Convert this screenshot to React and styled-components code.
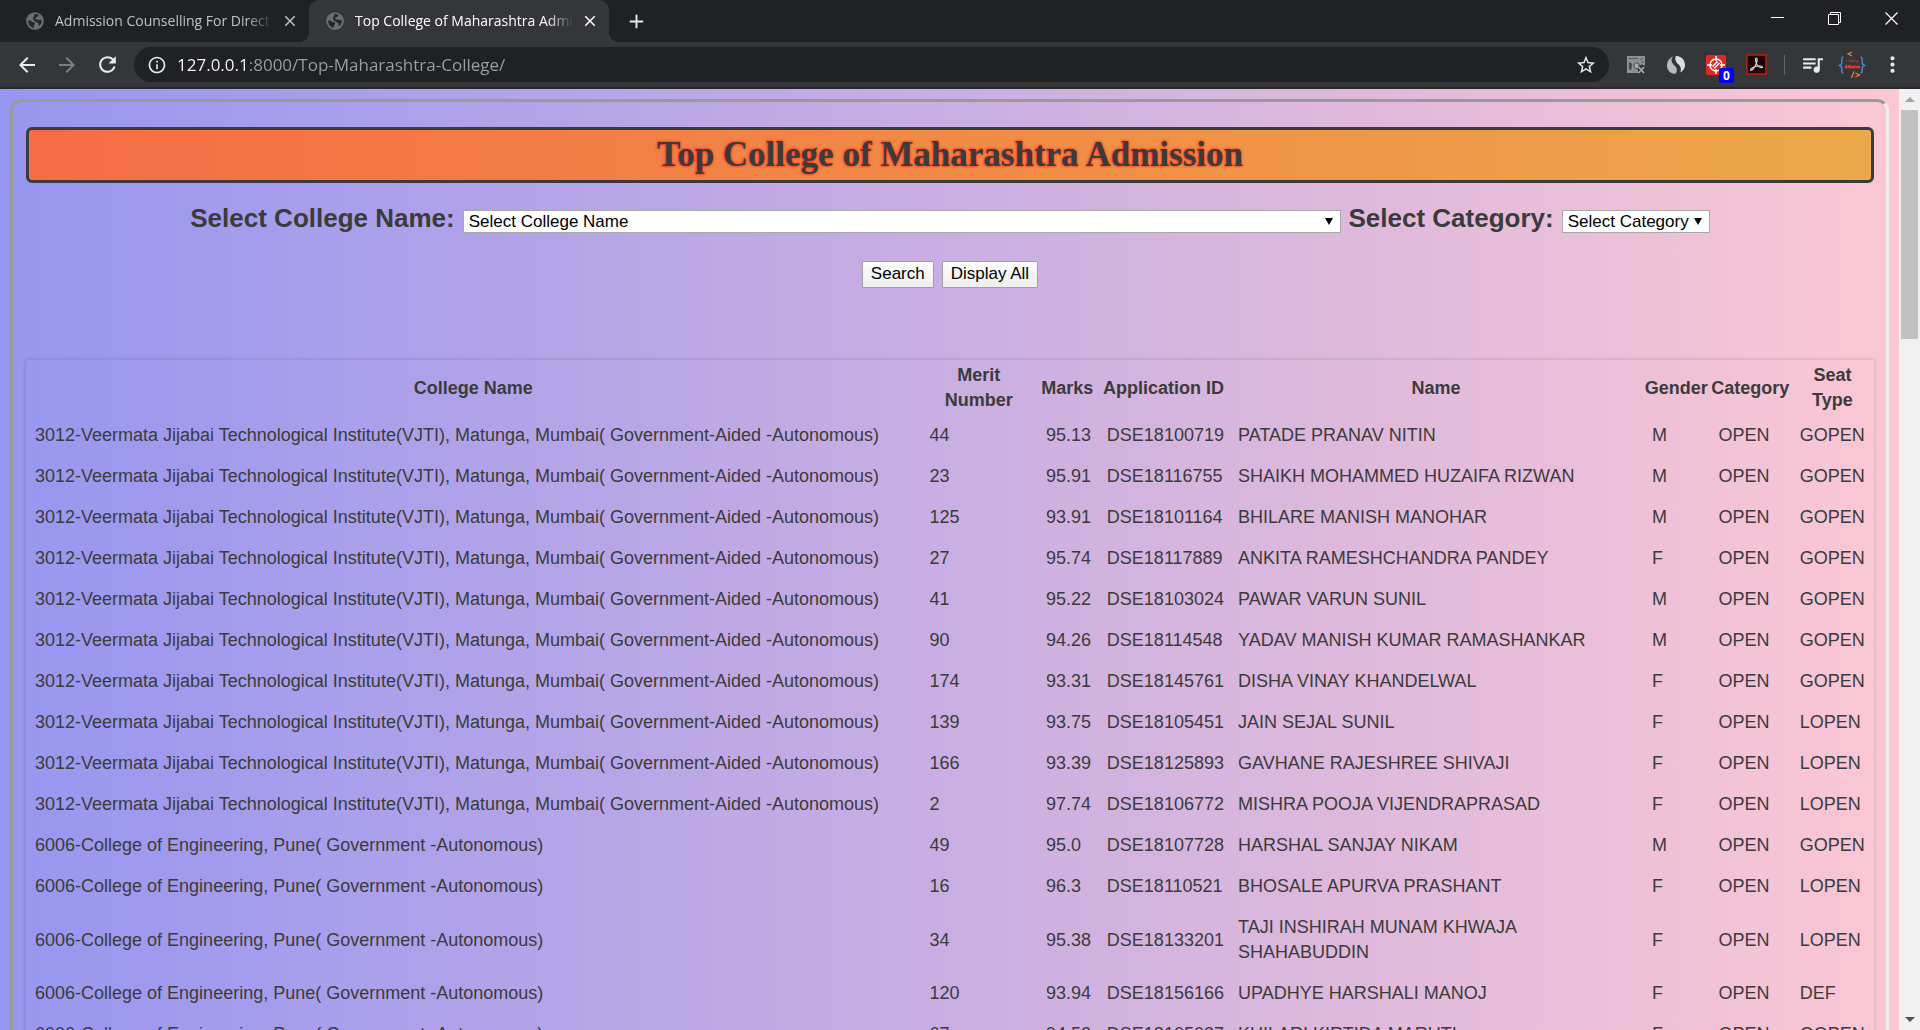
import React from "react";
import styled, { createGlobalStyle } from "styled-components";
import {
  MdAdd,
  MdArrowBack,
  MdArrowForward,
  MdClose,
  MdInfoOutline,
  MdMoreVert,
  MdQueueMusic,
  MdRefresh,
  MdStarBorder,
} from "react-icons/md";

const uiFont = `"Open Sans", "Noto Sans", sans-serif`;
const pageFont = `"Liberation Sans", Arial, sans-serif`;

const GlobalStyle = createGlobalStyle`
  *, *::before, *::after { box-sizing: border-box; }
  body { margin: 0; overflow: hidden; background: #202124; font-family: ${pageFont}; }
`;

/* ---------- browser window ---------- */

const Window = styled.div`
  display: flex;
  flex-direction: column;
  height: 100vh;
`;

const TabStrip = styled.header`
  display: flex;
  height: 42px;
  padding-left: 9px;
  background: #202124;
  color: #dee1e6;
  font-family: ${uiFont};
`;

const Tab = styled.div`
  position: relative;
  display: flex;
  align-items: center;
  width: 300px;
  padding: 0 9px 0 17px;
  border-radius: 10px 10px 0 0;
  background: ${(p) => (p.$active ? "#35363a" : "transparent")};
  color: ${(p) => (p.$active ? "#ffffff" : "#bdc1c6")};

  &::before,
  &::after {
    content: "";
    display: ${(p) => (p.$active ? "block" : "none")};
    position: absolute;
    bottom: 0;
    width: 10px;
    height: 10px;
  }
  &::before {
    left: -10px;
    background: radial-gradient(circle at 0 0, transparent 10px, #35363a 10px);
  }
  &::after {
    right: -10px;
    background: radial-gradient(circle at 100% 0, transparent 10px, #35363a 10px);
  }
`;

const TabTitle = styled.button`
  flex: 1;
  min-width: 0;
  margin: 0 7px 0 11px;
  padding: 0;
  border: 0;
  overflow: hidden;
  background: none;
  color: inherit;
  font: 14px/20px ${uiFont};
  text-align: left;
  white-space: nowrap;
  mask-image: linear-gradient(to right, #000 calc(100% - 26px), transparent);
`;

const IconButton = styled.button`
  display: flex;
  flex: none;
  align-items: center;
  justify-content: center;
  width: ${(p) => p.$width || 40}px;
  height: ${(p) => p.$height || 40}px;
  padding: 0;
  border: 0;
  background: none;
  color: ${(p) => p.$color || "#e8eaed"};
`;

const NewTab = styled(IconButton)`
  margin-left: 12px;
  height: 42px;
  width: 30px;
`;

const WindowControls = styled.div`
  display: flex;
  margin-left: auto;
`;

const Toolbar = styled.div`
  display: flex;
  align-items: center;
  height: 47px;
  padding: 0 8px 0 7px;
  border-bottom: 2px solid #28292b;
  background: #35363a;
`;

const AddressBar = styled.form`
  display: flex;
  flex: 1;
  align-items: center;
  height: 35px;
  margin: 0 7px;
  padding: 0 3px 0 13px;
  border-radius: 18px;
  background: #202124;
`;

const AddressInput = styled.input`
  flex: 1;
  min-width: 0;
  height: 30px;
  margin-left: 10px;
  padding: 0;
  border: 0;
  outline: 0;
  background: linear-gradient(to right, #ffffff 70px, #9aa0a6 70px);
  background-clip: text;
  -webkit-text-fill-color: transparent;
  font: 17px/30px ${uiFont};
`;

const ToolbarDivider = styled.span`
  width: 1px;
  height: 20px;
  margin: 0 7px 0 8px;
  background: #5f6368;
`;

const Body = styled.div`
  display: flex;
  flex: 1;
  min-height: 0;
`;

const ScrollTrack = styled.div`
  display: flex;
  flex: none;
  flex-direction: column;
  align-items: center;
  width: 21px;
  background: #f1f1f1;
`;

const ScrollArrow = styled.button`
  display: flex;
  align-items: center;
  justify-content: center;
  width: 21px;
  height: 21px;
  padding: 0;
  border: 0;
  background: none;

  &::before {
    content: "";
    border: 5px solid transparent;
    border-top-width: ${(p) => (p.$up ? 0 : 5)}px;
    border-bottom-width: ${(p) => (p.$up ? 5 : 0)}px;
    border-top-color: #505050;
    border-bottom-color: #a3a3a3;
  }
`;

const ScrollThumb = styled.div`
  width: 17px;
  height: 229px;
  margin-bottom: auto;
  background: #c1c1c1;
`;

/* ---------- page ---------- */

const Page = styled.main`
  flex: 1;
  min-width: 0;
  overflow: hidden;
  padding: 10px;
  background: linear-gradient(to right, #9796f0, #fbc7d4);
  color: #3b3b3b;
`;

const Frame = styled.section`
  padding: 25px 12px 25px 13px;
  border: 3px solid;
  border-color: #9a9a9a #eeeeee #eeeeee #9a9a9a;
  border-radius: 12px;
`;

const Title = styled.h1`
  margin: 0 0 20px;
  border: 3px solid #3b3b3b;
  border-radius: 6px;
  background: linear-gradient(to right, #f66c45, #eca849);
  font: bold 35px/50px "Liberation Serif", "Times New Roman", serif;
  text-align: center;
  text-shadow: 0 0 3px #ff0000;
`;

const Filters = styled.form`
  margin-bottom: 72px;
`;

const FilterRow = styled.div`
  display: flex;
  align-items: baseline;
  justify-content: center;
  gap: 8px;
`;

const ButtonRow = styled(FilterRow)`
  margin-top: 28px;
`;

const FilterLabel = styled.label`
  font-weight: bold;
  font-size: 26px;
  line-height: 30px;
  white-space: nowrap;
`;

const SelectBox = styled.span`
  position: relative;
  display: flex;
  width: ${(p) => p.$width};

  &::after {
    content: "";
    position: absolute;
    top: 8px;
    right: 8px;
    border: 4px solid transparent;
    border-top: 7px solid #000000;
    border-bottom: 0;
    pointer-events: none;
  }
`;

const Select = styled.select`
  appearance: none;
  width: 100%;
  height: 23px;
  padding: 0 5px;
  border: 1px solid #a9a9a9;
  border-radius: 0;
  background: #ffffff;
  color: #000000;
  font: 17px/21px ${pageFont};
`;

const Button = styled.button`
  height: 27px;
  padding: 0 8px 2px;
  border: 1px solid #a0a0a0;
  border-radius: 1px;
  background: linear-gradient(#fdfdfd, #eeeeee);
  color: #000000;
  font: 17px/23px ${pageFont};
`;

const Table = styled.table`
  width: 100%;
  border-collapse: collapse;
  table-layout: fixed;
  box-shadow: 0 0 4px rgba(0, 0, 0, 0.2);
  font-size: 18px;
  line-height: 25px;
`;

const Column = styled.col`
  width: ${(p) => p.$width};
`;

const HeadCell = styled.th`
  padding: 3px 0 2px;
  text-align: center;
  vertical-align: middle;
  white-space: pre-line;
`;

const Cell = styled.td`
  padding: 8px 9px;
  vertical-align: middle;
`;

/* ---------- drawings ---------- */

const Globe = () => (
  <svg width="18" height="18" viewBox="0 0 18 18" aria-hidden="true">
    <circle cx="9" cy="9" r="8.8" fill="#6b6f74" />
    <path
      d="M2.2 8.6c1.8-.3 3 .2 4.200 1.200 1 .8 2.200.2 2.600 1.200.4 1.200-.9 1.600-1 3-.1.9-.2 1.500-.6 2A7.200 7.200 0 0 1 2.200 8.600zM8.300 2c1.500-.2 3 .1 4.200.8.2 1.100-.5 1.700-1.500 1.900-.9.200-.6 1.100-1.500 1.400-1 .3-.5 1.300.6 1.200 1.400-.1 2 .7 3 .6.9-.1 1.500-.3 2.600.2.3 2.600-.7 4.800-2.700 6.200-.7-.7-.3-1.700-.4-2.600-.2-1.100-1.700-.8-2.400-1.700-.8-1.100-2.300-1.300-3-2.600-.5-1-.1-2.200.7-2.900.7-.6.300-1.500.4-2.500z"
      fill="#27282c"
    />
  </svg>
);

const ImageBlocker = () => (
  <svg width="20" height="20" viewBox="0 0 20 20" aria-hidden="true">
    <path d="M1 1h18v9.500l-3.500-1-3.500 2v6.500H1z" fill="#8f9091" />
    <path d="M3 7c1.500.5 3 1 3 3s-1 3-.5 5.500L3 14z" fill="#45464a" />
    <path d="M8 9c1.500-1.500 4-1.500 5 0 .5 1.500-.5 3.500-2 5.500-2-1-3.500-3-3-5.500z" fill="#a9aaab" stroke="#45464a" />
    <path d="M3 3.500h9M14 4.500l3-1M15 7h3" stroke="#55565a" strokeWidth="1" />
    <path d="M12.500 12l5.500 6M18 12l-5.500 6" stroke="#a8a9aa" strokeWidth="1.700" />
  </svg>
);

const Swirl = () => (
  <svg width="20" height="20" viewBox="0 0 20 20" aria-hidden="true">
    <path d="M7 1.600C4 5 6 8.500 9 11c2 1.800 2.500 4.500 1 7.500C5 19.500 1 15.500 1 10.500 1 6.500 3.500 3 7 1.600z" fill="#b9babb" />
    <path d="M9.800 1C14.500.6 19 4.500 19 10c0 3.500-2 6.300-4.800 7.600 1.500-3.400.6-6.100-1.800-8.300C9.800 7 8.500 4.500 9.800 1z" fill="#dcddde" />
  </svg>
);

const Badge = styled.span`
  position: absolute;
  right: 2px;
  bottom: 2px;
  width: 15px;
  height: 15px;
  border-radius: 2px;
  background: #0000ff;
  color: #ffffff;
  font: bold 12px/15px ${uiFont};
  text-align: center;
`;

const BadgedButton = styled(IconButton)`
  position: relative;
`;

const Target = () => (
  <svg width="20" height="20" viewBox="0 0 20 20" aria-hidden="true">
    <rect width="20" height="20" rx="2" fill="#e52521" />
    <g fill="none" stroke="#fff" strokeWidth="1.500">
      <circle cx="10" cy="10" r="6" />
      <path d="M10 1v5M10 14v5M1 10h5M14 10h5" />
      <path d="M6.500 11.500l5-5M8 13.500l5.500-5.500" />
    </g>
  </svg>
);

const Acrobat = () => (
  <svg width="21" height="21" viewBox="0 0 21 21" aria-hidden="true">
    <rect x="1" y="1" width="19" height="19" fill="#1d0003" stroke="#b2210f" strokeWidth="1.600" />
    <path
      d="M10.300 4.200c1.200 0 1 2.800.2 4.800-1.200 3-3.200 6.600-5 7.300-1.300.3-1.300-1.200.2-2 2.300-1.400 6-2.500 9-2.300 2.300.2 2.200 1.800.6 1.700-2-.1-4.200-2.500-5.100-4.800-.7-1.800-1-4.700.1-4.700z"
      fill="none"
      stroke="#dcd4d4"
      strokeWidth="1.200"
    />
  </svg>
);

const Avatar = () => (
  <svg width="28" height="28" viewBox="0 0 28 28" aria-hidden="true">
    <path d="M14 1l-4 2 4 2" fill="none" stroke="#d58a45" strokeWidth="1.200" />
    <path d="M5.500 6C2.500 6 4.500 12 3.500 13.200L1.500 14.500l2 1.300C4.500 17 2.500 22 5.500 22M22.500 6c3 0 1 6 2 7.200l2 1.300-2 1.300c-1 1.200 1 6.200-2 6.200" fill="none" stroke="#4f83cf" strokeWidth="1.500" />
    <path d="M16 20.500L13.500 27M17.500 22l4 2-4 2" fill="none" stroke="#d58a45" strokeWidth="1.200" />
    <text x="14" y="10.500" textAnchor="middle" fontFamily="Liberation Sans" fontSize="4" fill="#c9372c">Coding</text>
    <text x="14" y="17" textAnchor="middle" fontFamily="Liberation Sans" fontWeight="bold" fontSize="4" fill="#f0392b" stroke="#f0392b" strokeWidth=".4">Atharva</text>
  </svg>
);

const Minimize = () => (
  <svg width="13" height="13" viewBox="0 0 13 13" aria-hidden="true">
    <path d="M0 5.500h13" stroke="#fff" />
  </svg>
);

const Restore = () => (
  <svg width="13" height="13" viewBox="0 0 13 13" fill="none" stroke="#fff" aria-hidden="true">
    <path d="M.5 2.500h10v10H.5zM2.500 2.500v-2h10v10h-2" />
  </svg>
);

const CloseWindow = () => (
  <svg width="13" height="13" viewBox="0 0 13 13" aria-hidden="true">
    <path d="M.5.5l12 12M12.500.5l-12 12" stroke="#fff" strokeWidth="1.200" />
  </svg>
);

/* ---------- data ---------- */

const VJTI =
  "3012-Veermata Jijabai Technological Institute(VJTI), Matunga, Mumbai( Government-Aided -Autonomous)";
const COEP = "6006-College of Engineering, Pune( Government -Autonomous)";

const columns = [
  ["College Name", "48.4%"],
  ["Merit\nNumber", "6.3%"],
  ["Marks", "3.3%"],
  ["Application ID", "7.1%"],
  ["Name", "22.4%"],
  ["Gender", "3.6%"],
  ["Category", "4.4%"],
  ["Seat\nType", "4.5%"],
];

const rows = [
  [VJTI, "44", "95.13", "DSE18100719", "PATADE PRANAV NITIN", "M", "OPEN", "GOPEN"],
  [VJTI, "23", "95.91", "DSE18116755", "SHAIKH MOHAMMED HUZAIFA RIZWAN", "M", "OPEN", "GOPEN"],
  [VJTI, "125", "93.91", "DSE18101164", "BHILARE MANISH MANOHAR", "M", "OPEN", "GOPEN"],
  [VJTI, "27", "95.74", "DSE18117889", "ANKITA RAMESHCHANDRA PANDEY", "F", "OPEN", "GOPEN"],
  [VJTI, "41", "95.22", "DSE18103024", "PAWAR VARUN SUNIL", "M", "OPEN", "GOPEN"],
  [VJTI, "90", "94.26", "DSE18114548", "YADAV MANISH KUMAR RAMASHANKAR", "M", "OPEN", "GOPEN"],
  [VJTI, "174", "93.31", "DSE18145761", "DISHA VINAY KHANDELWAL", "F", "OPEN", "GOPEN"],
  [VJTI, "139", "93.75", "DSE18105451", "JAIN SEJAL SUNIL", "F", "OPEN", "LOPEN"],
  [VJTI, "166", "93.39", "DSE18125893", "GAVHANE RAJESHREE SHIVAJI", "F", "OPEN", "LOPEN"],
  [VJTI, "2", "97.74", "DSE18106772", "MISHRA POOJA VIJENDRAPRASAD", "F", "OPEN", "LOPEN"],
  [COEP, "49", "95.0", "DSE18107728", "HARSHAL SANJAY NIKAM", "M", "OPEN", "GOPEN"],
  [COEP, "16", "96.3", "DSE18110521", "BHOSALE APURVA PRASHANT", "F", "OPEN", "LOPEN"],
  [COEP, "34", "95.38", "DSE18133201", "TAJI INSHIRAH MUNAM KHWAJA SHAHABUDDIN", "F", "OPEN", "LOPEN"],
  [COEP, "120", "93.94", "DSE18156166", "UPADHYE HARSHALI MANOJ", "F", "OPEN", "DEF"],
  [COEP, "67", "94.52", "DSE18105037", "KHILARI KIRTIDA MARUTI", "F", "OPEN", "GOPEN"],
];

const tabs = [
  { title: "Admission Counselling For Direct Second Year", active: false },
  { title: "Top College of Maharashtra Admission", active: true },
];

export default function App() {
  return (
    <Window>
      <GlobalStyle />
      <TabStrip>
        {tabs.map((tab) => (
          <Tab key={tab.title} $active={tab.active}>
            <Globe />
            <TabTitle type="button">{tab.title}</TabTitle>
            <IconButton type="button" aria-label="Close tab" $width={20} $height={20} $color="inherit">
              <MdClose size={18} />
            </IconButton>
          </Tab>
        ))}
        <NewTab type="button" aria-label="New tab">
          <MdAdd size={23} />
        </NewTab>
        <WindowControls>
          <IconButton type="button" aria-label="Minimize" $width={57} $height={37}><Minimize /></IconButton>
          <IconButton type="button" aria-label="Restore" $width={57} $height={37}><Restore /></IconButton>
          <IconButton type="button" aria-label="Close" $width={57} $height={37}><CloseWindow /></IconButton>
        </WindowControls>
      </TabStrip>

      <Toolbar>
        <IconButton type="button" aria-label="Back"><MdArrowBack size={24} /></IconButton>
        <IconButton type="button" aria-label="Forward" $color="#7d7e81"><MdArrowForward size={24} /></IconButton>
        <IconButton type="button" aria-label="Reload"><MdRefresh size={25} /></IconButton>
        <AddressBar onSubmit={(e) => e.preventDefault()}>
          <MdInfoOutline size={20} color="#e8eaed" />
          <AddressInput aria-label="Address" defaultValue="127.0.0.1:8000/Top-Maharashtra-College/" />
          <IconButton type="button" aria-label="Bookmark" $height={30}><MdStarBorder size={22} /></IconButton>
        </AddressBar>
        <IconButton type="button" aria-label="Image blocker"><ImageBlocker /></IconButton>
        <IconButton type="button" aria-label="Swirl"><Swirl /></IconButton>
        <BadgedButton type="button" aria-label="Tracker count">
          <Target />
          <Badge>0</Badge>
        </BadgedButton>
        <IconButton type="button" aria-label="PDF"><Acrobat /></IconButton>
        <ToolbarDivider />
        <IconButton type="button" aria-label="Media"><MdQueueMusic size={25} /></IconButton>
        <IconButton type="button" aria-label="Profile"><Avatar /></IconButton>
        <IconButton type="button" aria-label="Menu"><MdMoreVert size={25} /></IconButton>
      </Toolbar>

      <Body>
        <Page>
          <Frame>
            <Title>Top College of Maharashtra Admission</Title>
            <Filters onSubmit={(e) => e.preventDefault()}>
              <FilterRow>
                <FilterLabel htmlFor="college">Select College Name:</FilterLabel>
                <SelectBox $width="47.5%">
                  <Select id="college">
                    <option>Select College Name</option>
                  </Select>
                </SelectBox>
                <FilterLabel htmlFor="category">Select Category:</FilterLabel>
                <SelectBox $width="148px">
                  <Select id="category">
                    <option>Select Category</option>
                  </Select>
                </SelectBox>
              </FilterRow>
              <ButtonRow>
                <Button type="submit">Search</Button>
                <Button type="button">Display All</Button>
              </ButtonRow>
            </Filters>
            <Table>
              <colgroup>
                {columns.map(([name, width]) => (
                  <Column key={name} $width={width} />
                ))}
              </colgroup>
              <thead>
                <tr>
                  {columns.map(([name]) => (
                    <HeadCell key={name} scope="col">{name}</HeadCell>
                  ))}
                </tr>
              </thead>
              <tbody>
                {rows.map((row) => (
                  <tr key={row[3]}>
                    {row.map((value, i) => (
                      <Cell key={i}>{value}</Cell>
                    ))}
                  </tr>
                ))}
              </tbody>
            </Table>
          </Frame>
        </Page>
        <ScrollTrack>
          <ScrollArrow type="button" aria-label="Scroll up" $up />
          <ScrollThumb />
          <ScrollArrow type="button" aria-label="Scroll down" />
        </ScrollTrack>
      </Body>
    </Window>
  );
}
